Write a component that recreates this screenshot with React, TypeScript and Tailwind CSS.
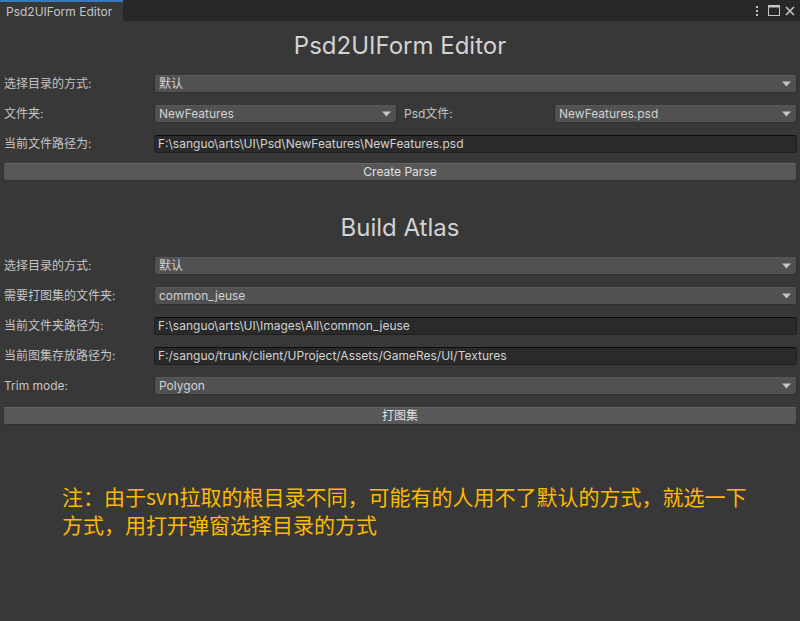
import React from 'react';

const font = "font-['Inter','Noto_Sans_CJK_SC',sans-serif]";

const Arrow = () => (
  <svg width="9" height="6" viewBox="0 0 9 6" className="shrink-0">
    <polygon points="0,0.5 9,0.5 4.5,5.5" fill="#c4c4c4" />
  </svg>
);

const Popup: React.FC<{ value: string }> = ({ value }) => (
  <div className="flex-1 h-[18px] flex items-center justify-between pl-[4px] pr-[5px] bg-[#515151] border border-[#303030] border-t-[#585858] rounded-[3px] text-[12px] text-[#d2d2d2] leading-[16px] min-w-0">
    <span className="whitespace-nowrap">{value}</span>
    <Arrow />
  </div>
);

const Field: React.FC<{ value: string }> = ({ value }) => (
  <div className="flex-1 h-[18px] flex items-center pl-[3px] bg-[#2a2a2a] border border-[#212121] border-t-[#0d0d0d] rounded-[3px] text-[12px] text-[#d2d2d2] leading-[16px] min-w-0">
    <span className="whitespace-nowrap">{value}</span>
  </div>
);

const Row: React.FC<{ label: string; children: React.ReactNode }> = ({ label, children }) => (
  <div className="flex-1 flex items-center h-[18px]">
    <div className="w-[151px] shrink-0 pl-[1px] text-[12px] text-[#c4c4c4] leading-[16px] whitespace-nowrap">{label}</div>
    {children}
  </div>
);

const Button: React.FC<{ text: string }> = ({ text }) => (
  <div className="h-[18px] flex items-center justify-center bg-[#585858] border border-[#303030] border-t-[#656565] rounded-[3px] text-[12px] text-[#e0e0e0] leading-[16px]">
    {text}
  </div>
);

const Title: React.FC<{ text: string }> = ({ text }) => (
  <div className="h-[50px] flex items-center justify-center text-[24px] text-[#d2d2d2]">{text}</div>
);

export default function App() {
  return (
    <div className={`w-[800px] h-[621px] bg-[#383838] ${font} overflow-hidden`}>
      <div className="h-[21px] bg-[#282828] flex items-stretch justify-between">
        <div className="w-[123px] bg-[#383838] border-t-2 border-[#3a79bb] flex items-center pl-[6px] text-[12px] text-[#c4c4c4] leading-[16px]">
          Psd2UIForm Editor
        </div>
        <div className="flex items-center pr-[5px]">
          <svg width="4" height="12" viewBox="0 0 4 12" className="mr-[9px]">
            <rect x="1" y="1" width="2" height="2" fill="#c4c4c4" />
            <rect x="1" y="5" width="2" height="2" fill="#c4c4c4" />
            <rect x="1" y="9" width="2" height="2" fill="#c4c4c4" />
          </svg>
          <svg width="12" height="11" viewBox="0 0 12 11" className="mr-[5px]">
            <rect x="0.5" y="0.5" width="11" height="10" fill="none" stroke="#c4c4c4" />
            <rect x="0.5" y="0.5" width="11" height="2" fill="#c4c4c4" />
          </svg>
          <svg width="10" height="10" viewBox="0 0 10 10">
            <path d="M1 1 L9 9 M9 1 L1 9" stroke="#c4c4c4" strokeWidth="1.6" />
          </svg>
        </div>
      </div>

      <div className="px-[3px]">
        <Title text="Psd2UIForm Editor" />
        <div className="mt-[4px] flex flex-col gap-[12px]">
          <Row label="选择目录的方式:">
            <Popup value="默认" />
          </Row>
          <div className="flex items-center h-[18px] gap-[6px]">
            <Row label="文件夹:">
              <Popup value="NewFeatures" />
            </Row>
            <Row label="Psd文件:">
              <Popup value="NewFeatures.psd" />
            </Row>
          </div>
          <Row label="当前文件路径为:">
            <Field value="F:\sanguo\arts\UI\Psd\NewFeatures\NewFeatures.psd" />
          </Row>
        </div>
        <div className="mt-[10px]">
          <Button text="Create Parse" />
        </div>

        <div className="mt-[22px]">
          <Title text="Build Atlas" />
        </div>
        <div className="mt-[4px] flex flex-col gap-[12px]">
          <Row label="选择目录的方式:">
            <Popup value="默认" />
          </Row>
          <Row label="需要打图集的文件夹:">
            <Popup value="common_jeuse" />
          </Row>
          <Row label="当前文件夹路径为:">
            <Field value="F:\sanguo\arts\UI\Images\All\common_jeuse" />
          </Row>
          <Row label="当前图集存放路径为:">
            <Field value="F:/sanguo/trunk/client/UProject/Assets/GameRes/UI/Textures" />
          </Row>
          <Row label="Trim mode:">
            <Popup value="Polygon" />
          </Row>
          <Button text="打图集" />
        </div>

        <div className="mt-[57px] ml-[59px] w-[700px] text-[21px] leading-[28px] text-[#fcb900] font-['Microsoft_YaHei','Noto_Sans_CJK_SC',sans-serif]">
          注：由于svn拉取的根目录不同，可能有的人用不了默认的方式，就选一下方式，用打开弹窗选择目录的方式
        </div>
      </div>
    </div>
  );
}
